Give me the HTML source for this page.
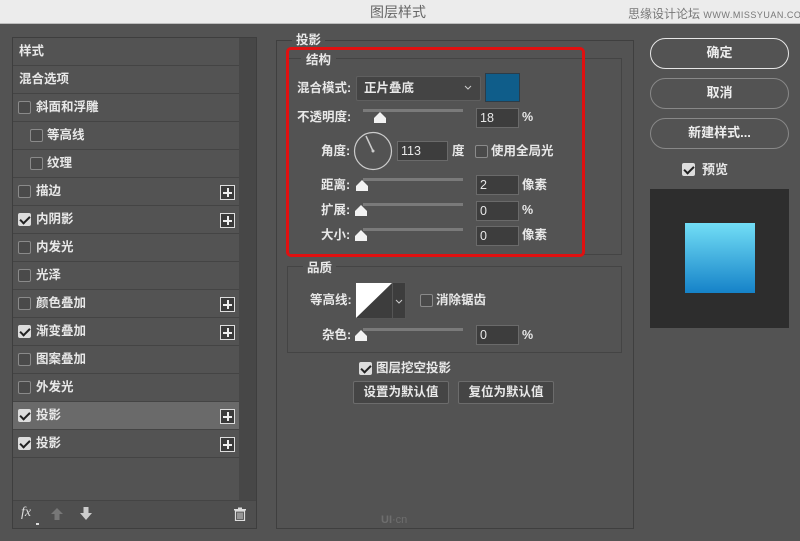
<!DOCTYPE html>
<html><head><meta charset="utf-8"><style>
*{margin:0;padding:0;box-sizing:border-box}
body{width:800px;height:541px;overflow:hidden;background:#535353;font-family:"Liberation Sans","Noto Sans CJK SC",sans-serif;font-size:12px;color:#e8e8e8;position:relative}
.a{position:absolute;white-space:nowrap}
.title{left:0;top:0;width:800px;height:24px;background:#ececec;border-bottom:1px solid #bdbdbd}
.row{position:absolute;left:13px;width:226px;height:28px;border-bottom:1px solid #444;line-height:27px;font-size:12.5px;font-weight:bold}
.cb{position:absolute;width:13px;height:13px;border:1px solid #8a8a8a;border-radius:2px;background:#4a4a4a}
.cb.on{background:#ddd;border-color:#ddd}
.cb.on::after{content:"";position:absolute;left:3px;top:0px;width:4px;height:8px;border:solid #222;border-width:0 2px 2px 0;transform:rotate(45deg)}
.plus{position:absolute;left:207px;top:7px;width:15px;height:15px;border:1px solid #ddd;background:#3a3a3a}
.plus::before{content:"";position:absolute;left:2px;top:6px;width:9px;height:1.5px;background:#eee}
.plus::after{content:"";position:absolute;left:6px;top:2px;width:1.5px;height:9px;background:#eee}
.inp{position:absolute;height:20px;background:#3d3d3d;border:1px solid #6a6a6a;line-height:18px;padding-left:3px;font-size:12.5px}
.track{position:absolute;height:3px;background:#7a7a7a}
.thumb{position:absolute;width:0;height:0}
.thumb::before{content:"";position:absolute;left:-6px;top:-6px;width:12px;height:11px;background:#f2f2f2;clip-path:polygon(50% 0,100% 55%,100% 100%,0 100%,0 55%)}
.lbl{position:absolute;font-size:12.5px;font-weight:bold;white-space:nowrap;line-height:14px}
.btn{position:absolute;border:1.5px solid #888;border-radius:16px;text-align:center;font-size:13px;font-weight:bold;line-height:27px;color:#eee}
.sb{position:absolute;height:23px;background:#454545;border:1px solid #6c6c6c;border-radius:2px;text-align:center;line-height:21px;font-weight:bold;font-size:12.5px}
</style></head><body>
<div class="a title"></div>
<div class="a" style="left:370px;top:3px;font-size:14px;color:#666;line-height:18px">图层样式</div>
<div class="a" style="left:628px;top:7px;font-size:12px;color:#777;line-height:14px">思缘设计论坛 <span style="font-size:9px;letter-spacing:0.5px">WWW.MISSYUAN.COM</span></div>

<!-- left panel -->
<div class="a" style="left:12px;top:37px;width:245px;height:492px;border:1px solid #3e3e3e;background:#4d4d4d"></div>
<div class="a" style="left:239px;top:38px;width:17px;height:462px;background:#474747"></div>
<div class="a" style="left:13px;top:38px;width:226px;height:462px;background:#535353"></div>
<div class="row" style="top:38px;padding-left:6px">样式</div>
<div class="row" style="top:66px;padding-left:6px">混合选项</div>
<div class="row" style="top:94px"><div class="cb" style="left:5px;top:7px"></div><span style="position:absolute;left:23px">斜面和浮雕</span></div>
<div class="row" style="top:122px"><div class="cb" style="left:17px;top:7px"></div><span style="position:absolute;left:34px">等高线</span></div>
<div class="row" style="top:150px"><div class="cb" style="left:17px;top:7px"></div><span style="position:absolute;left:34px">纹理</span></div>
<div class="row" style="top:178px"><div class="cb" style="left:5px;top:7px"></div><span style="position:absolute;left:23px">描边</span><div class="plus"></div></div>
<div class="row" style="top:206px"><div class="cb on" style="left:5px;top:7px"></div><span style="position:absolute;left:23px">内阴影</span><div class="plus"></div></div>
<div class="row" style="top:234px"><div class="cb" style="left:5px;top:7px"></div><span style="position:absolute;left:23px">内发光</span></div>
<div class="row" style="top:262px"><div class="cb" style="left:5px;top:7px"></div><span style="position:absolute;left:23px">光泽</span></div>
<div class="row" style="top:290px"><div class="cb" style="left:5px;top:7px"></div><span style="position:absolute;left:23px">颜色叠加</span><div class="plus"></div></div>
<div class="row" style="top:318px"><div class="cb on" style="left:5px;top:7px"></div><span style="position:absolute;left:23px">渐变叠加</span><div class="plus"></div></div>
<div class="row" style="top:346px"><div class="cb" style="left:5px;top:7px"></div><span style="position:absolute;left:23px">图案叠加</span></div>
<div class="row" style="top:374px"><div class="cb" style="left:5px;top:7px"></div><span style="position:absolute;left:23px">外发光</span></div>
<div class="row" style="top:402px;background:#6a6a6a"><div class="cb on" style="left:5px;top:7px"></div><span style="position:absolute;left:23px">投影</span><div class="plus"></div></div>
<div class="row" style="top:430px"><div class="cb on" style="left:5px;top:7px"></div><span style="position:absolute;left:23px">投影</span><div class="plus"></div></div>
<div class="a" style="left:13px;top:500px;width:243px;height:28px;background:#4f4f4f;border-top:1px solid #444"></div>
<div class="a" style="left:21px;top:505px;font-style:italic;font-size:14px;color:#ddd;font-family:'Liberation Serif',serif;line-height:16px">fx</div>
<div class="a" style="left:36px;top:523px;width:3px;height:2px;background:#ddd"></div>
<svg class="a" style="left:50px;top:507px" width="14" height="14"><path d="M7 1 L13 7 H9.5 V13 H4.5 V7 H1Z" fill="#777"/></svg>
<svg class="a" style="left:79px;top:507px" width="14" height="14"><path d="M4.5 0 H9.5 V6 H13 L7 13 L1 6 H4.5Z" fill="#ccc"/></svg>
<svg class="a" style="left:233px;top:507px" width="14" height="14"><rect x="1" y="2" width="12" height="1.5" fill="#ddd"/><rect x="5" y="0.5" width="4" height="2" fill="#ddd"/><path d="M2.5 4 H11.5 V13.5 H2.5Z" fill="none" stroke="#ddd" stroke-width="1.2"/><path d="M5 5.5V12M7 5.5V12M9 5.5V12" stroke="#ddd"/></svg>

<!-- right group -->
<div class="a" style="left:276px;top:40px;width:358px;height:489px;border:1px solid #3f3f3f"></div>
<div class="lbl" style="left:292px;top:33px;background:#535353;padding:0 4px">投影</div>
<div class="a" style="left:287px;top:58px;width:335px;height:197px;border:1px solid #444"></div>
<div class="lbl" style="left:301px;top:53px;background:#535353;padding:0 5px">结构</div>
<div class="a" style="left:286px;top:47px;width:299px;height:210px;border:3px solid #e01010;border-radius:5px"></div>

<div class="lbl" style="left:297px;top:81px">混合模式:</div>
<div class="a" style="left:356px;top:76px;width:125px;height:25px;background:#444;border:1px solid #5f5f5f;border-radius:2px"></div>
<div class="lbl" style="left:364px;top:81px">正片叠底</div>
<svg class="a" style="left:464px;top:85px" width="8" height="6"><path d="M1 1 L4 4 L7 1" fill="none" stroke="#ccc"/></svg>
<div class="a" style="left:485px;top:73px;width:35px;height:29px;background:#0f5d8a;border:1px solid #2c3c48"></div>

<div class="lbl" style="left:297px;top:110px">不透明度:</div>
<div class="track" style="left:363px;top:109px;width:100px"></div>
<div class="thumb" style="left:380px;top:118px"></div>
<div class="inp" style="left:476px;top:108px;width:43px">18</div>
<div class="lbl" style="left:522px;top:110px">%</div>

<div class="lbl" style="left:321px;top:144px">角度:</div>
<svg class="a" style="left:353px;top:131px" width="40" height="40"><circle cx="20" cy="20" r="18.5" fill="none" stroke="#ccc" stroke-width="1.2"/><line x1="20" y1="20" x2="13" y2="5" stroke="#ccc" stroke-width="1.5"/><circle cx="20" cy="20" r="1.5" fill="#ccc"/></svg>
<div class="inp" style="left:397px;top:141px;width:51px">113</div>
<div class="lbl" style="left:452px;top:144px">度</div>
<div class="cb" style="left:475px;top:145px"></div>
<div class="lbl" style="left:491px;top:144px">使用全局光</div>

<div class="lbl" style="left:321px;top:178px">距离:</div>
<div class="track" style="left:363px;top:178px;width:100px"></div>
<div class="thumb" style="left:362px;top:186px"></div>
<div class="inp" style="left:476px;top:175px;width:43px">2</div>
<div class="lbl" style="left:522px;top:178px">像素</div>

<div class="lbl" style="left:321px;top:203px">扩展:</div>
<div class="track" style="left:363px;top:203px;width:100px"></div>
<div class="thumb" style="left:361px;top:211px"></div>
<div class="inp" style="left:476px;top:201px;width:43px">0</div>
<div class="lbl" style="left:522px;top:203px">%</div>

<div class="lbl" style="left:321px;top:228px">大小:</div>
<div class="track" style="left:363px;top:228px;width:100px"></div>
<div class="thumb" style="left:361px;top:236px"></div>
<div class="inp" style="left:476px;top:226px;width:43px">0</div>
<div class="lbl" style="left:522px;top:228px">像素</div>

<!-- quality -->
<div class="a" style="left:287px;top:266px;width:335px;height:87px;border:1px solid #444"></div>
<div class="lbl" style="left:303px;top:261px;background:#535353;padding:0 4px">品质</div>
<div class="lbl" style="left:310px;top:293px">等高线:</div>
<svg class="a" style="left:355px;top:282px" width="51" height="37"><rect x="0.5" y="0.5" width="50" height="36" fill="#3d3d3d" stroke="#555"/><path d="M1 36 L37 1 H1Z" fill="#fff"/><line x1="37.5" y1="1" x2="37.5" y2="36" stroke="#555"/><path d="M41 18 L44 21 L47 18" fill="none" stroke="#ccc"/></svg>
<div class="cb" style="left:420px;top:294px"></div>
<div class="lbl" style="left:436px;top:293px">消除锯齿</div>
<div class="lbl" style="left:322px;top:328px">杂色:</div>
<div class="track" style="left:363px;top:328px;width:100px"></div>
<div class="thumb" style="left:361px;top:336px"></div>
<div class="inp" style="left:476px;top:325px;width:43px">0</div>
<div class="lbl" style="left:522px;top:328px">%</div>

<div class="cb on" style="left:359px;top:362px"></div>
<div class="lbl" style="left:376px;top:361px">图层挖空投影</div>
<div class="sb" style="left:353px;top:381px;width:96px">设置为默认值</div>
<div class="sb" style="left:458px;top:381px;width:96px">复位为默认值</div>
<div class="a" style="left:381px;top:514px;font-size:11px;color:#6e6e6e;font-weight:bold;line-height:13px">UI<span style="font-weight:normal">·cn</span></div>

<!-- right column -->
<div class="btn" style="left:650px;top:38px;width:139px;height:31px;border-color:#e6e6e6">确定</div>
<div class="btn" style="left:650px;top:78px;width:139px;height:31px">取消</div>
<div class="btn" style="left:650px;top:118px;width:139px;height:31px">新建样式...</div>
<div class="cb on" style="left:682px;top:163px"></div>
<div class="lbl" style="left:702px;top:163px;font-size:13px">预览</div>
<div class="a" style="left:650px;top:189px;width:139px;height:139px;background:#2d2d2d"></div>
<div class="a" style="left:685px;top:223px;width:70px;height:70px;background:linear-gradient(#72def6,#1582c8)"></div>
</body></html>
